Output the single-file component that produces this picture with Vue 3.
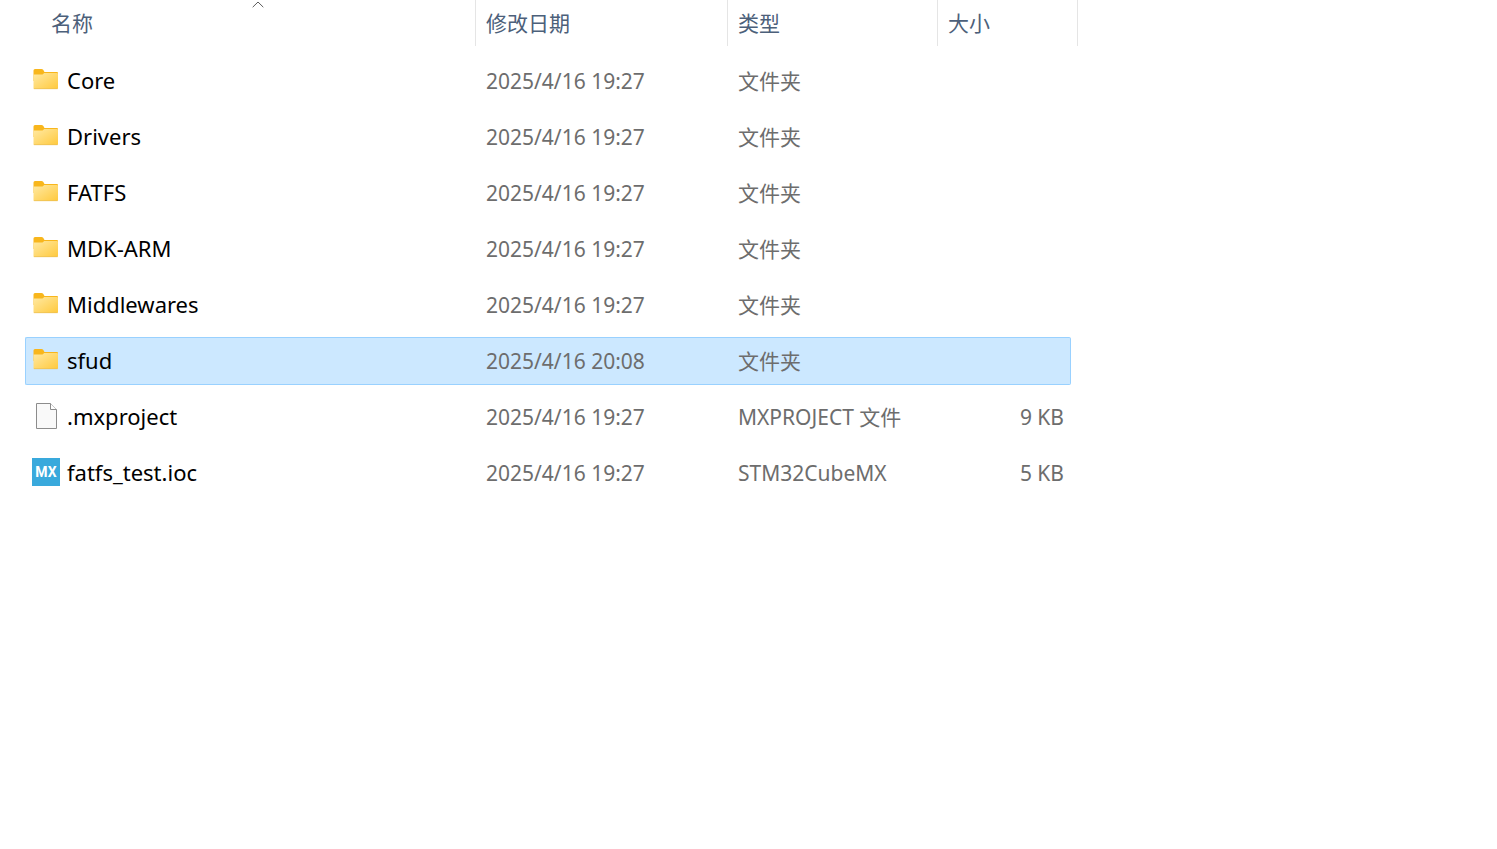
<template>
  <main class="file-view">
    <table class="file-table">
      <colgroup>
        <col class="col-name" />
        <col class="col-date" />
        <col class="col-type" />
        <col class="col-size" />
        <col class="col-edge" />
        <col />
      </colgroup>
      <thead>
        <tr>
          <th class="head-name" aria-sort="ascending">
            <button type="button" class="head-button">
              名称
              <svg class="sort-arrow" viewBox="0 0 12 7" aria-hidden="true">
                <path d="M0.7 6.2 6 1l5.3 5.2" fill="none" stroke="#5c5c5c" />
              </svg>
            </button>
          </th>
          <th><button type="button" class="head-button">修改日期</button></th>
          <th><button type="button" class="head-button">类型</button></th>
          <th colspan="2"><button type="button" class="head-button">大小</button></th>
        </tr>
      </thead>
      <tbody>
        <tr
          v-for="file in files"
          :key="file.name"
          :class="{ selected: selectedName === file.name }"
          @click="selectedName = file.name"
        >
          <td>
            <div class="file-name">
              <svg v-if="file.icon === 'folder'" class="file-icon" viewBox="0 0 28 28" aria-hidden="true">
                <path d="M1.500 4.500Q1.500 3 3 3h6.500q1 0 1.700.7L12.500 6H25q1 0 1 1v8H1.500z" fill="#f8b61c" />
                <path d="M1.500 8.500h8q1 0 1.700-.6l.9-.9H25q1 0 1 1v14q0 1-1 1H2.500q-1 0-1-1z" fill="url(#folder-front)" />
                <path d="M1.800 22.700h23.900" stroke="#e9bd55" stroke-width="0.700" />
              </svg>
              <svg v-else-if="file.icon === 'blank'" class="file-icon" viewBox="0 0 28 28" aria-hidden="true">
                <path d="M4.500 1.500h14l6 6v19h-20z" fill="#f9f9f9" stroke="#8c8c8c" />
                <path d="M18.500 1.500v6h6" fill="#fff" stroke="#8c8c8c" />
              </svg>
              <svg v-else class="file-icon" viewBox="0 0 28 28" aria-hidden="true">
                <rect width="28" height="28" fill="#39a9dc" />
                <text class="mx-label" x="14" y="19" text-anchor="middle">MX</text>
              </svg>
              <span>{{ file.name }}</span>
            </div>
          </td>
          <td>{{ file.date }}</td>
          <td>{{ file.type }}</td>
          <td class="file-size">{{ file.size }}</td>
        </tr>
      </tbody>
    </table>

    <svg class="defs" width="0" height="0" aria-hidden="true">
      <defs>
        <linearGradient id="folder-front" x1="0" y1="0" x2="1" y2="1">
          <stop offset="0" stop-color="#ffe9a3" />
          <stop offset="1" stop-color="#ffc93c" />
        </linearGradient>
      </defs>
    </svg>
  </main>
</template>

<script setup>
import { ref } from 'vue'

const selectedName = ref('sfud')

const files = [
  { name: 'Core', date: '2025/4/16 19:27', type: '文件夹', size: '', icon: 'folder' },
  { name: 'Drivers', date: '2025/4/16 19:27', type: '文件夹', size: '', icon: 'folder' },
  { name: 'FATFS', date: '2025/4/16 19:27', type: '文件夹', size: '', icon: 'folder' },
  { name: 'MDK-ARM', date: '2025/4/16 19:27', type: '文件夹', size: '', icon: 'folder' },
  { name: 'Middlewares', date: '2025/4/16 19:27', type: '文件夹', size: '', icon: 'folder' },
  { name: 'sfud', date: '2025/4/16 20:08', type: '文件夹', size: '', icon: 'folder' },
  { name: '.mxproject', date: '2025/4/16 19:27', type: 'MXPROJECT 文件', size: '9 KB', icon: 'blank' },
  { name: 'fatfs_test.ioc', date: '2025/4/16 19:27', type: 'STM32CubeMX', size: '5 KB', icon: 'mx' }
]
</script>

<style>
body {
  background: #fff;
}
</style>

<style scoped>
.file-view {
  padding-left: 25px;
  font-family: 'Noto Sans', 'Noto Sans CJK SC', sans-serif;
  font-size: 21px;
  line-height: 30px;
  color: #6d6d6d;
}

.file-table {
  width: 100%;
  margin-top: -8px;
  table-layout: fixed;
  border-collapse: separate;
  border-spacing: 0 8px;
}

.col-name {
  width: 451px;
}

.col-date {
  width: 252px;
}

.col-type {
  width: 210px;
}

.col-size {
  width: 133px;
}

.col-edge {
  width: 7px;
}

th {
  padding: 0 0 3px;
  font-weight: 400;
}

.head-name {
  padding-left: 16px;
}

.head-button {
  position: relative;
  display: block;
  box-sizing: border-box;
  width: 100%;
  height: 46px;
  padding: 0 10px 2px;
  border: none;
  border-right: 1px solid #e5e5e5;
  background: transparent;
  color: #4c607a;
  font-family: 'Noto Sans CJK SC', sans-serif;
  font-size: 21px;
  font-weight: 400;
  line-height: 30px;
  text-align: left;
}

.sort-arrow {
  position: absolute;
  top: 1px;
  left: 50%;
  width: 12px;
  height: 7px;
  margin-left: -6px;
}

td {
  box-sizing: border-box;
  height: 48px;
  padding: 0 10px;
  border: 0 solid transparent;
  border-width: 1px 0;
  white-space: nowrap;
}

td:first-child {
  padding: 0 6px 2px;
  border-left-width: 1px;
  border-radius: 2px 0 0 2px;
  color: #000;
}

td:last-child {
  padding: 0 6px;
  border-right-width: 1px;
  border-radius: 0 2px 2px 0;
}

.selected td {
  background: #cce8ff;
  border-color: #99d1ff;
}

.file-name {
  display: flex;
  align-items: center;
  gap: 7px;
  font-size: 22px;
}

.file-icon {
  flex: none;
  width: 28px;
  height: 28px;
}

.mx-label {
  fill: #fff;
  font-family: Roboto, sans-serif;
  font-size: 14px;
  font-weight: 700;
}

.file-size {
  text-align: right;
}

.defs {
  position: absolute;
}
</style>
